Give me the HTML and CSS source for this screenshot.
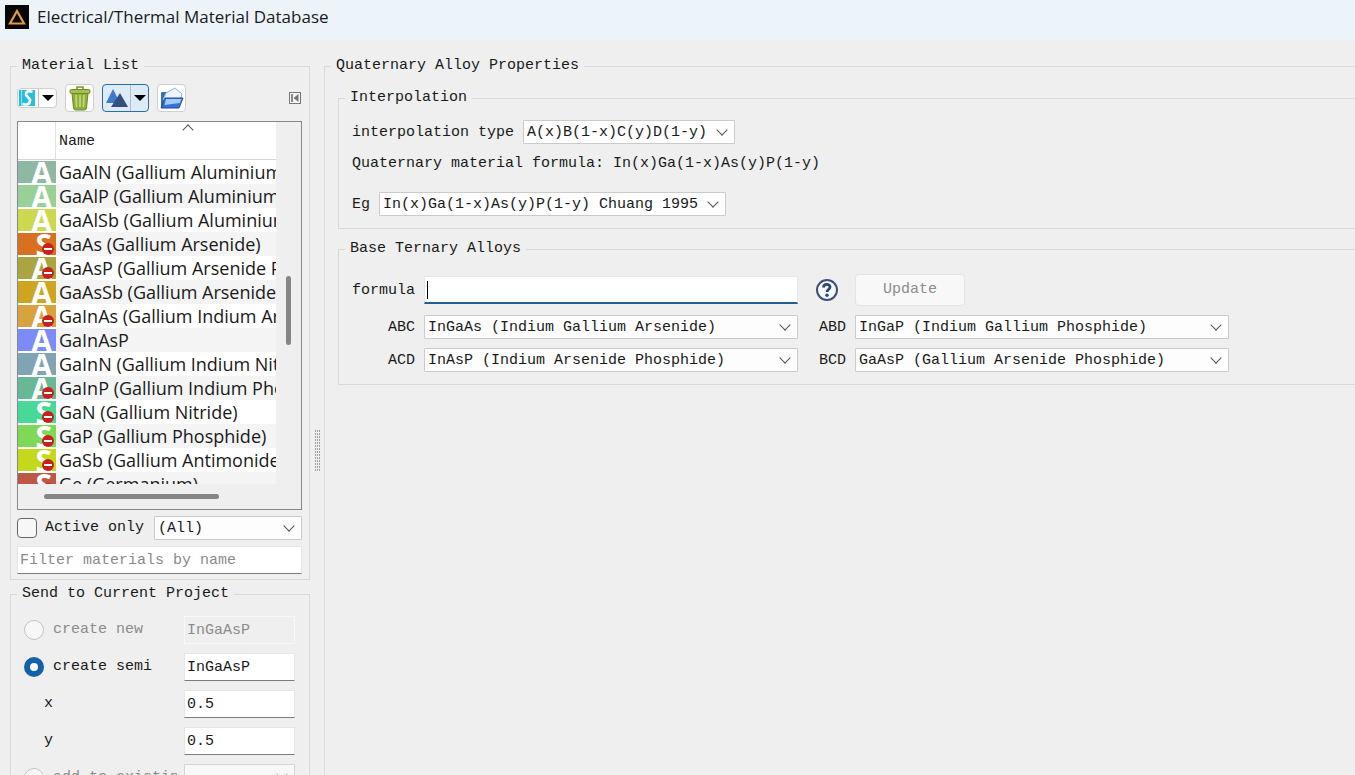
FILE: index.html
```html
<!DOCTYPE html>
<html lang="en">
<head>
  <meta charset="utf-8">
  <title>Electrical/Thermal Material Database</title>
  <link rel="stylesheet" href="styles.css">
</head>
<body>
  <header class="titlebar">
    <svg class="app-icon" viewBox="0 0 24 24">
      <rect width="24" height="24" fill="#060606"/>
      <path d="M12 6L19 18.500H5z" fill="none" stroke="#e39a3b" stroke-width="2.200"/>
    </svg>
    <h1>Electrical/Thermal Material Database</h1>
  </header>

  <main class="window">
    <div class="sidebar">
      <fieldset class="group list-group">
        <legend>Material List</legend>
        <div class="toolbar">
          <button type="button" class="tool split small" aria-label="Add material">
            <svg width="18" height="18" viewBox="0 0 18 18">
              <rect x="1" y="1" width="16" height="16" fill="#27bde0"/>
              <rect x="3" y="1" width="1" height="16" fill="#8fe0f2"/>
              <path d="M14.500 3C11 1.500 7.500 2.500 8 5.500c.4 2.500 4.500 3 4 6.500-.4 3.500-4 4-7.500 3" fill="none" stroke="#fff" stroke-width="2.600"/>
            </svg>
            <span class="arrow"></span>
          </button>
          <button type="button" class="tool" aria-label="Delete material">
            <svg width="24" height="26" viewBox="0 0 24 26">
              <path d="M4 8h16l-1.500 15q-.2 2-2 2h-9q-1.800 0-2-2z" fill="#8fae3a" stroke="#6c8a24"/>
              <path d="M8 10l.6 12M12 10v12M16 10l-.6 12" stroke="#bfd67a" stroke-width="1.800" fill="none"/>
              <rect x="2" y="4.500" width="20" height="4" rx="1.500" fill="#a3c052" stroke="#6c8a24"/>
              <path d="M9 4.500V2h6v2.500" fill="none" stroke="#7a9830" stroke-width="1.600"/>
            </svg>
          </button>
          <button type="button" class="tool split active" aria-label="Material view">
            <svg width="24" height="20" viewBox="0 0 24 20">
              <path d="M8 1L15 15H1z" fill="#3f78cc"/>
              <path d="M15 5l8 14H6z" fill="#34507f"/>
            </svg>
            <span class="arrow"></span>
          </button>
          <button type="button" class="tool" aria-label="Import">
            <svg width="25" height="24" viewBox="0 0 25 24">
              <path d="M2 21V7q0-1 1-1h5l2 2h11v13z" fill="#3a6db8"/>
              <path d="M4 14l3-7 9-5 7 6-2 7z" fill="#eef5fc" stroke="#8fb3dc"/>
              <path d="M6 12h18l-4 10H2z" fill="#3572d4" stroke="#1c4ba5"/>
              <path d="M7 13h15.500l-1.500 4-15.500 2z" fill="#a4cbf5"/>
            </svg>
          </button>
          <button type="button" class="collapse" aria-label="Collapse panel">
            <svg width="12" height="12" viewBox="0 0 12 12">
              <rect x=".5" y=".5" width="11" height="11" fill="#f6f6f6" stroke="#777"/>
              <path d="M3 2v8" stroke="#666" stroke-width="1.500"/>
              <path d="M9.500 2v8L4.500 6z" fill="#777"/>
            </svg>
          </button>
        </div>

        <div class="material-view">
          <div class="material-rows">
            <table>
              <thead>
                <tr><th class="swatch-col" aria-label="Type"></th><th><span class="sort"></span>Name</th></tr>
              </thead>
              <tbody>
                <tr><td class="swatch c-gaaln"><b>A</b></td><td>GaAlN (Gallium Aluminium Nitride)</td></tr>
                <tr><td class="swatch c-gaalp"><b>A</b></td><td>GaAlP (Gallium Aluminium Phosphide)</td></tr>
                <tr><td class="swatch c-gaalsb"><b>A</b></td><td>GaAlSb (Gallium Aluminium Antimonide)</td></tr>
                <tr><td class="swatch c-gaas locked"><b>S</b></td><td>GaAs (Gallium Arsenide)</td></tr>
                <tr><td class="swatch c-gaasp locked"><b>A</b></td><td>GaAsP (Gallium Arsenide Phosphide)</td></tr>
                <tr><td class="swatch c-gaassb"><b>A</b></td><td>GaAsSb (Gallium Arsenide Antimonide)</td></tr>
                <tr><td class="swatch c-gainas locked"><b>A</b></td><td>GaInAs (Gallium Indium Arsenide)</td></tr>
                <tr><td class="swatch c-gainasp"><b>A</b></td><td>GaInAsP</td></tr>
                <tr><td class="swatch c-gainn"><b>A</b></td><td>GaInN (Gallium Indium Nitride)</td></tr>
                <tr><td class="swatch c-gainp locked"><b>A</b></td><td>GaInP (Gallium Indium Phosphide)</td></tr>
                <tr><td class="swatch c-gan locked"><b>S</b></td><td>GaN (Gallium Nitride)</td></tr>
                <tr><td class="swatch c-gap locked"><b>S</b></td><td>GaP (Gallium Phosphide)</td></tr>
                <tr><td class="swatch c-gasb locked"><b>S</b></td><td>GaSb (Gallium Antimonide)</td></tr>
                <tr><td class="swatch c-ge locked"><b>S</b></td><td>Ge (Germanium)</td></tr>
              </tbody>
            </table>
          </div>
          <div class="vscroll"><span></span></div>
          <div class="hscroll"><span></span></div>
        </div>

        <div class="filter-row">
          <label class="check"><input type="checkbox">Active only</label>
          <span class="select"><select aria-label="Category"><option>(All)</option></select></span>
        </div>
        <input class="field filter" type="text" placeholder="Filter materials by name" aria-label="Filter materials by name">
      </fieldset>

      <fieldset class="group send-group">
        <legend>Send to Current Project</legend>
        <div class="send-row disabled">
          <label><input type="radio" name="send" disabled>create new</label>
          <input class="field" type="text" value="InGaAsP" aria-label="New material name" disabled>
        </div>
        <div class="send-row">
          <label><input type="radio" name="send" checked>create semi</label>
          <input class="field" type="text" value="InGaAsP" aria-label="Semiconductor name">
        </div>
        <div class="send-row">
          <label class="var" for="x-value">x</label>
          <input class="field" id="x-value" type="text" value="0.5">
        </div>
        <div class="send-row">
          <label class="var" for="y-value">y</label>
          <input class="field" id="y-value" type="text" value="0.5">
        </div>
        <div class="send-row disabled">
          <label><input type="radio" name="send" disabled>add to existing</label>
          <span class="select"><select aria-label="Existing material" disabled><option></option></select></span>
        </div>
      </fieldset>
    </div>

    <div class="splitter"></div>

    <fieldset class="group properties">
      <legend>Quaternary Alloy Properties</legend>

      <fieldset class="group interpolation">
        <legend>Interpolation</legend>
        <div class="line">
          <label for="interp-type">interpolation type</label>
          <span class="select"><select id="interp-type"><option>A(x)B(1-x)C(y)D(1-y)</option></select></span>
        </div>
        <p class="line">Quaternary material formula: In(x)Ga(1-x)As(y)P(1-y)</p>
        <div class="line eg">
          <label for="eg">Eg</label>
          <span class="select"><select id="eg"><option>In(x)Ga(1-x)As(y)P(1-y) Chuang 1995</option></select></span>
        </div>
      </fieldset>

      <fieldset class="group ternary">
        <legend>Base Ternary Alloys</legend>
        <div class="ternary-grid">
          <label for="formula">formula</label>
          <span class="formula-box"><input class="field" id="formula" type="text"></span>
          <button type="button" class="help" aria-label="Help">
            <svg width="24" height="24" viewBox="0 0 24 24">
              <circle cx="12" cy="12" r="10" fill="#f4f6fa" stroke="#3c5078" stroke-width="2"/>
              <path d="M8.500 9.500C8.500 5.500 15 5.500 15 9c0 2.500-3 2.500-3 5" fill="none" stroke="#2f4672" stroke-width="2.800"/>
              <circle cx="12" cy="17.300" r="1.700" fill="#2f4672"/>
            </svg>
          </button>
          <button type="button" class="update" disabled>Update</button>

          <label for="abc">ABC</label>
          <span class="select"><select id="abc"><option>InGaAs (Indium Gallium Arsenide)</option></select></span>
          <label for="abd">ABD</label>
          <span class="select"><select id="abd"><option>InGaP (Indium Gallium Phosphide)</option></select></span>

          <label for="acd">ACD</label>
          <span class="select"><select id="acd"><option>InAsP (Indium Arsenide Phosphide)</option></select></span>
          <label for="bcd">BCD</label>
          <span class="select"><select id="bcd"><option>GaAsP (Gallium Arsenide Phosphide)</option></select></span>
        </div>
      </fieldset>
    </fieldset>
  </main>
</body>
</html>
```
FILE: styles.css
```css
*, *::before, *::after {
  box-sizing: border-box;
}
body {
  margin: 0;
  height: 100vh;
  display: flex;
  flex-direction: column;
  overflow: hidden;
  background: #efefef;
  color: #1a1a1a;
  font: 15px/20px "Liberation Mono", monospace;
}
input, select, button {
  font: inherit;
  color: inherit;
  margin: 0;
}

/* title bar */
.titlebar {
  display: flex;
  flex: none;
  align-items: flex-start;
  gap: 8px;
  height: 40px;
  padding: 5px;
  background: #ecf4f9;
}
.app-icon {
  width: 24px;
  height: 24px;
}
.titlebar h1 {
  margin: 0;
  font: 17px/24px "Open Sans", sans-serif;
}

.window {
  display: flex;
  flex: 1;
  min-height: 0;
  padding: 16px 0 0 10px;
}
.sidebar {
  flex: none;
  width: 300px;
}

/* group boxes */
.group {
  margin: 0;
  min-width: 0;
  border: 1px solid #d9d9d9;
  padding: 8px 7px 5px 6px;
}
.group > legend {
  padding: 0 5px;
  line-height: 20px;
}

/* toolbar */
.toolbar {
  display: flex;
  align-items: center;
  gap: 8px;
  height: 28px;
}
.tool {
  display: flex;
  align-items: center;
  justify-content: center;
  width: 29px;
  height: 28px;
  padding: 0;
  border: 1px solid #cfcfcf;
  border-radius: 4px;
  background: #fdfdfd;
}
.tool.split {
  width: 47px;
  justify-content: space-between;
  padding-left: 2px;
}
.tool.small {
  width: 40px;
  height: 20px;
  padding-left: 0;
}
.tool.active {
  border-color: #2a6da0;
  background: #dcebf7;
}
.arrow {
  display: flex;
  align-items: center;
  justify-content: center;
  align-self: stretch;
  width: 18px;
  border-left: 1px solid #b5bec6;
}
.arrow::before {
  content: "";
  border: 6px solid transparent;
  border-top-color: #000;
  border-bottom: 0;
}
.collapse {
  display: flex;
  margin-left: auto;
  padding: 0 1px;
  border: 0;
  background: none;
}

/* material list */
.material-view {
  display: grid;
  grid-template-columns: 1fr 25px;
  grid-template-rows: 362px 25px;
  margin-top: 9px;
  border: 1px solid #828790;
}
.material-rows {
  overflow: hidden;
  background: #fff;
}
.material-rows table {
  width: 100%;
  table-layout: fixed;
  border-collapse: separate;
  border-spacing: 0;
}
.material-rows th {
  position: relative;
  height: 38px;
  padding: 2px 3px 0;
  border-bottom: 1px solid #d4d4d4;
  font-weight: normal;
  text-align: left;
}
.material-rows .swatch-col {
  width: 38px;
  border-right: 1px solid #e0e0e0;
}
.sort {
  position: absolute;
  top: 4px;
  left: 50%;
  margin-left: 18px;
  width: 8px;
  height: 8px;
  border: 1px solid #555;
  border-width: 1px 0 0 1px;
  transform: rotate(45deg);
}
.material-rows td {
  height: 24px;
  padding: 0 0 0 3px;
  overflow: hidden;
  font: 18px/24px "Open Sans", sans-serif;
  white-space: nowrap;
}
.material-rows tbody tr:nth-child(even) {
  background: #f4f4f4;
}
.material-rows .swatch {
  position: relative;
  padding: 0 4px 0 0;
  border: 1px solid #fff;
  border-width: 1px 0;
  text-align: right;
}
.swatch b {
  display: block;
  height: 22px;
  overflow: hidden;
  color: #fff;
  font: bold 30px/24px "Liberation Sans Narrow", "Open Sans", sans-serif;
}
.locked::after {
  content: "";
  position: absolute;
  right: 2px;
  bottom: 0;
  width: 12px;
  height: 12px;
  border-radius: 6px;
  background: linear-gradient(#fff, #fff) center / 8px 2px no-repeat #c8201c;
}
.c-gaaln { background: #8fb8a3; }
.c-gaalp { background: #98d097; }
.c-gaalsb { background: #ccd850; }
.c-gaas { background: #d9701f; }
.c-gaasp { background: #aaa540; }
.c-gaassb { background: #cea520; }
.c-gainas { background: #d8a23c; }
.c-gainasp { background: #7b8cf8; }
.c-gainn { background: #80a4b4; }
.c-gainp { background: #68b896; }
.c-gan { background: #48d898; }
.c-gap { background: #80d858; }
.c-gasb { background: #c4d81c; }
.c-ge { background: #bc5848; }

.vscroll {
  display: flex;
  justify-content: center;
  padding-top: 154px;
}
.vscroll span {
  width: 5px;
  height: 69px;
  border-radius: 3px;
  background: #858585;
}
.hscroll {
  display: flex;
  align-items: center;
  padding-left: 26px;
}
.hscroll span {
  width: 175px;
  height: 5px;
  border-radius: 3px;
  background: #858585;
}

/* form controls */
.field {
  width: 100%;
  height: 28px;
  padding: 0 2px;
  border: 1px solid #e6e6e6;
  border-bottom-color: #7d7d7d;
  border-radius: 0;
  background: #fff;
  outline: 0;
}
.field::placeholder {
  color: #8a8a8a;
  opacity: 1;
}
.field:disabled {
  border-color: #f8f8f8;
  background: #efefef;
}
.select {
  position: relative;
  display: block;
}
.select select {
  display: block;
  width: 100%;
  height: 24px;
  padding: 2px 26px 0 3px;
  appearance: none;
  border: 1px solid #cbcbcb;
  border-radius: 1px;
  background: #fdfdfd;
}
.select::after {
  content: "";
  position: absolute;
  top: 6px;
  right: 9px;
  width: 8px;
  height: 8px;
  border: solid #555;
  border-width: 0 1px 1px 0;
  transform: rotate(45deg);
  pointer-events: none;
}
input[type="checkbox"],
input[type="radio"] {
  flex: none;
  width: 20px;
  height: 20px;
  appearance: none;
  border: 1px solid #666;
  border-radius: 4px;
  background: #f7f7f7;
}
input[type="radio"] {
  border-radius: 50%;
}
input[type="radio"]:checked {
  border: 6px solid #1460aa;
  background: #fff;
}
input[type="radio"]:disabled {
  border-color: #c4c4c4;
}

.filter-row {
  display: flex;
  align-items: center;
  gap: 10px;
  margin-top: 6px;
}
.check {
  display: flex;
  gap: 8px;
  white-space: nowrap;
}
.filter-row .select {
  flex: 1;
}
.filter {
  display: block;
  margin-top: 6px;
}

.send-group {
  margin-top: 4px;
  padding: 12px 14px 8px 13px;
}
.send-group > legend,
.properties > legend {
  margin-left: -7px;
}
.send-row {
  display: flex;
  align-items: center;
  justify-content: space-between;
  height: 28px;
  margin-bottom: 9px;
}
.send-row label {
  display: flex;
  align-items: center;
  gap: 9px;
  width: 153px;
  overflow: hidden;
  white-space: nowrap;
}
.send-row .var {
  padding-left: 20px;
}
.send-row .field,
.send-row .select {
  width: 111px;
}
.send-row select {
  height: 28px;
}
.disabled,
.disabled .field {
  color: #8c8c8c;
}
.disabled .select::after {
  border-color: #bbb;
}

.splitter {
  flex: none;
  width: 5px;
  height: 42px;
  margin: 373px 4px 0 5px;
  background:
    repeating-linear-gradient(#efefef 0 1px, transparent 1px 3px),
    repeating-linear-gradient(90deg, #a0a0a0 0 1px, #efefef 1px 2px);
}

/* alloy properties, the boxes run on past the right edge */
.properties {
  flex: 1;
  padding: 12px 0 0 13px;
  border-right: 0;
  border-bottom: 0;
}
.properties .group {
  border-right: 0;
  padding-left: 13px;
}
.properties > .group > legend {
  margin-left: -7px;
}
.line {
  display: flex;
  align-items: center;
  gap: 9px;
  margin: 0;
}
.line label,
.ternary-grid label {
  padding-top: 2px;
}
.interpolation .line + .line {
  margin-top: 10px;
}
.interpolation .line.eg {
  margin-top: 18px;
}
.interpolation {
  padding-top: 12px;
  padding-bottom: 12px;
}
.ternary {
  margin-top: 10px;
  padding-top: 15px;
  padding-bottom: 12px;
}
.ternary-grid {
  display: grid;
  grid-template-columns: 63px minmax(0, 374px) 39px minmax(0, 374px);
  column-gap: 9px;
  row-gap: 9px;
  align-items: center;
}
.ternary-grid label {
  text-align: right;
}
.formula-box {
  position: relative;
}
.formula-box .field {
  display: block;
  border-bottom: 2px solid #255f92;
}
.formula-box::before {
  content: "";
  position: absolute;
  top: 5px;
  left: 3px;
  width: 1px;
  height: 18px;
  background: #000;
}
.help {
  display: flex;
  justify-content: center;
  padding: 0;
  border: 0;
  background: none;
}
.update {
  width: 110px;
  height: 32px;
  border: 1px solid #e4e4e4;
  border-radius: 4px;
  background: #f8f8f8;
  color: #8c8c8c;
}
```
